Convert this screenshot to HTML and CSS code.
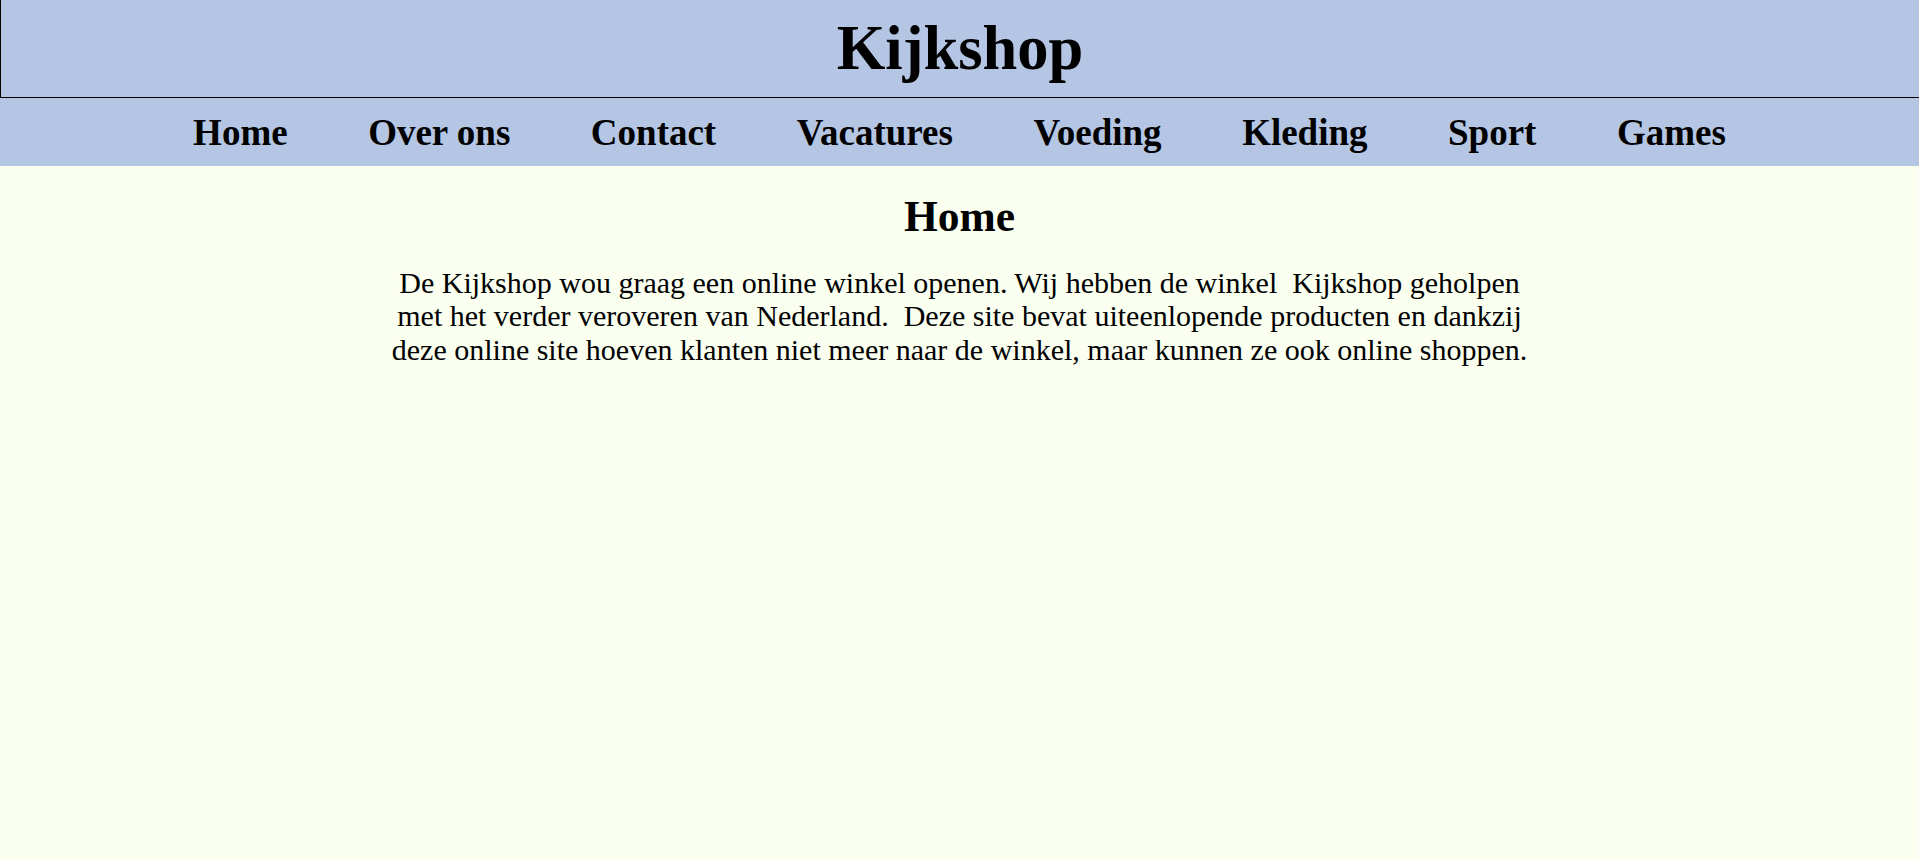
FILE: index.html
```html
<!DOCTYPE html>
<html lang="nl">
<head>
<meta charset="utf-8">
<title>Kijkshop</title>
<link rel="stylesheet" href="styles.css">
</head>
<body>
<header class="site-header">
  <h1 class="site-title">Kijkshop</h1>
</header>
<nav class="main-nav">
  <ul class="nav-list">
    <li class="nav-item"><a class="nav-link" href="#">Home</a></li>
    <li class="nav-item"><a class="nav-link" href="#">Over ons</a></li>
    <li class="nav-item"><a class="nav-link" href="#">Contact</a></li>
    <li class="nav-item"><a class="nav-link" href="#">Vacatures</a></li>
    <li class="nav-item"><a class="nav-link" href="#">Voeding</a></li>
    <li class="nav-item"><a class="nav-link" href="#">Kleding</a></li>
    <li class="nav-item"><a class="nav-link" href="#">Sport</a></li>
    <li class="nav-item"><a class="nav-link" href="#">Games</a></li>
  </ul>
</nav>
<main class="content">
  <h2 class="page-title">Home</h2>
  <p class="intro">De Kijkshop wou graag een online winkel openen. Wij hebben de winkel&nbsp; Kijkshop geholpen met het verder veroveren van Nederland.&nbsp; Deze site bevat uiteenlopende producten en dankzij deze online site hoeven klanten niet meer naar de winkel, maar kunnen ze ook online shoppen.</p>
</main>
</body>
</html>
```
FILE: styles.css
```css
html, body {
  margin: 0;
  padding: 0;
}
body {
  background: #fafff0;
  font-family: "Liberation Serif", "Times New Roman", serif;
  color: #000;
  min-height: 860px;
}
.site-header {
  background: #b4c6e4;
  border-left: 1px solid #000;
  border-bottom: 1px solid #000;
  height: 97px;
  box-sizing: content-box;
  display: flex;
  justify-content: center;
}
.site-title {
  margin: 0;
  padding-top: 12px;
  font-size: 62.5px;
  font-weight: bold;
  line-height: normal;
}
.main-nav {
  background: #b4c6e4;
  height: 68px;
}
.nav-list {
  list-style: none;
  margin: 0;
  padding: 12.5px 0 0;
  display: flex;
  justify-content: center;
}
.nav-item {
  padding: 0 40.25px;
}
.nav-link {
  color: #000;
  text-decoration: none;
  font-size: 37px;
  font-weight: bold;
  line-height: normal;
}
.content {
  width: 60%;
  margin: 0 auto;
  text-align: center;
  padding-top: 25px;
}
.page-title {
  margin: 0;
  font-size: 43.5px;
  font-weight: bold;
  line-height: normal;
}
.intro {
  margin: 25px 0 0;
  font-size: 30px;
  line-height: 33.3px;
}
```
